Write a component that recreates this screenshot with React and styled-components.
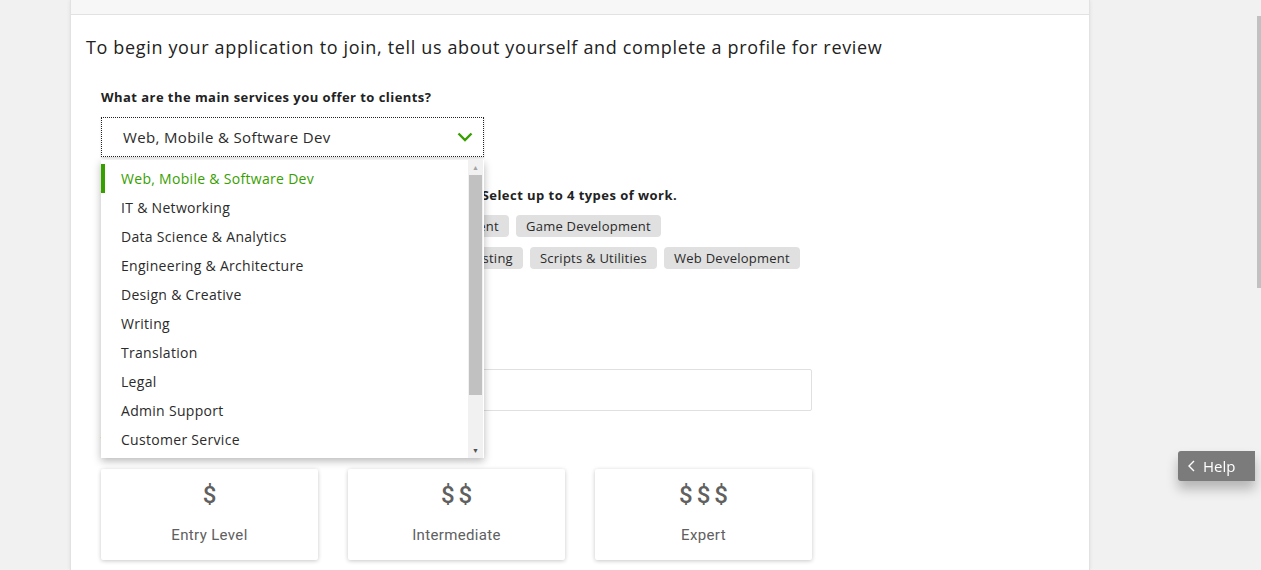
import styled, { createGlobalStyle } from 'styled-components';

const GlobalStyle = createGlobalStyle`
    html, body {
        margin: 0;
        padding: 0;
        background-color: #f1f1f1;
        font-family: 'Open Sans', 'Liberation Sans', sans-serif;
        color: #222222;
        overflow: hidden;
    }
`

const Page = styled.div`
    display: flex;
    min-height: 100vh;
    padding-left: 70px;
`

const Sheet = styled.main`
    width: 1018px;
    min-height: 100vh;
    background-color: #ffffff;
    border-left: 1px solid #e2e2e2;
    border-right: 1px solid #e2e2e2;
    box-shadow: 0px 0px 4px rgba(0, 0, 0, 0.08);
    display: flex;
    flex-direction: column;
`

const TopStrip = styled.div`
    height: 14px;
    background-color: #f7f7f7;
    border-bottom: 1px solid #e2e2e2;
`

const Heading = styled.h1`
    margin: 20px 0 0 0;
    padding: 0 15px;
    font-size: 18px;
    line-height: 24px;
    font-weight: 400;
    letter-spacing: 0.65px;
    color: #222222;
`

const Form = styled.section`
    display: flex;
    flex-direction: column;
    padding-left: 30px;
`

const Label = styled.div`
    margin-top: ${props => props.gap}px;
    font-size: 13px;
    line-height: 18px;
    font-weight: 700;
    letter-spacing: 0.45px;
    color: #222222;
`

const SelectWrap = styled.div`
    position: relative;
    width: 383px;
    margin-top: 11px;
`

const SelectBox = styled.div`
    height: 38px;
    border: 1px dotted #222222;
    display: flex;
    align-items: center;
    justify-content: space-between;
    padding: 0 10px 0 21px;
    font-size: 15px;
    letter-spacing: 0.35px;
    color: #2b2b2b;
    box-shadow: 0px 1px 2px rgba(0, 0, 0, 0.15);
`

const Dropdown = styled.div`
    position: absolute;
    top: calc(100% + 3px);
    left: 0;
    width: 383px;
    height: 298px;
    background-color: #ffffff;
    box-shadow: 0px 3px 8px rgba(0, 0, 0, 0.28);
    display: flex;
    z-index: 5;
`

const OptionList = styled.ul`
    flex: 1;
    list-style: none;
    margin: 0;
    padding: 4px 0 0 0;
    overflow: hidden;
`

const Option = styled.li`
    height: 29px;
    display: flex;
    align-items: center;
    padding-left: ${props => props.selected ? '16px' : '20px'};
    border-left: ${props => props.selected ? '4px solid #37a000' : 'none'};
    font-size: 14px;
    letter-spacing: 0.3px;
    color: ${props => props.selected ? '#37a000' : '#2b2b2b'};
`

const ScrollTrack = styled.div`
    width: 15px;
    margin-right: 1px;
    background-color: #f1f1f1;
    display: flex;
    flex-direction: column;
    align-items: center;
`

const ScrollArrow = styled.div`
    height: 15px;
    display: flex;
    align-items: center;
    justify-content: center;
    font-size: 7px;
    color: ${props => props.active ? '#505050' : '#a3a3a3'};
`

const ScrollThumb = styled.div`
    width: 13px;
    height: 220px;
    background-color: #c1c1c1;
`

const ScrollSpace = styled.div`
    flex: 1;
`

const Chips = styled.div`
    width: 711px;
    margin-top: 11px;
    display: flex;
    flex-wrap: wrap;
    gap: 10px 7px;
`

const Chip = styled.span`
    height: 22px;
    display: flex;
    align-items: center;
    padding: 0 10px;
    border-radius: 4px;
    background-color: #e0e0e0;
    font-size: 13px;
    letter-spacing: 0.25px;
    color: #2b2b2b;
`

const TextInput = styled.div`
    width: 709px;
    height: 40px;
    margin-top: 15px;
    border: 1px solid #e0e0e0;
    border-radius: 2px;
`

const Levels = styled.div`
    display: flex;
    gap: 30px;
    margin-top: 19px;
`

const LevelCard = styled.div`
    width: 217px;
    height: 91px;
    background-color: #ffffff;
    border-radius: 2px;
    box-shadow: 0px 1px 4px rgba(0, 0, 0, 0.22);
    display: flex;
    flex-direction: column;
    align-items: center;
    color: #606060;
`

const Dollars = styled.div`
    margin-top: 12px;
    font-family: 'Roboto', 'Liberation Sans', sans-serif;
    font-size: 24px;
    line-height: 28px;
    font-weight: 500;
    word-spacing: -2px;
`

const LevelName = styled.div`
    margin-top: 17px;
    font-family: 'Roboto', 'Liberation Sans', sans-serif;
    font-size: 15px;
    line-height: 18px;
    letter-spacing: 0.35px;
`

const HelpButton = styled.button`
    position: fixed;
    top: 451px;
    right: 6px;
    width: 77px;
    height: 30px;
    border: none;
    border-radius: 3px 0 0 3px;
    background-color: #7b7b7b;
    color: #ffffff;
    font-family: 'Open Sans', sans-serif;
    font-size: 15px;
    display: flex;
    align-items: center;
    gap: 8px;
    padding: 0 0 0 10px;
    box-shadow: 0px 8px 12px rgba(0, 0, 0, 0.25);
`

const PageScroll = styled.div`
    position: fixed;
    top: 16px;
    right: 0;
    width: 4px;
    height: 272px;
    background-color: #c1c1c1;
`

const services = [
    'Web, Mobile & Software Dev',
    'IT & Networking',
    'Data Science & Analytics',
    'Engineering & Architecture',
    'Design & Creative',
    'Writing',
    'Translation',
    'Legal',
    'Admin Support',
    'Customer Service',
    'Sales & Marketing',
    'Accounting & Consulting',
]

const skills = [
    'Desktop Software Development',
    'Ecommerce Development',
    'Game Development',
    'Mobile Development',
    'Product Management',
    'QA & Testing',
    'Scripts & Utilities',
    'Web Development',
]

const levels = [
    { sign: '$', name: 'Entry Level' },
    { sign: '$ $', name: 'Intermediate' },
    { sign: '$ $ $', name: 'Expert' },
]

const Chevron = () => (
    <svg width="16" height="10" viewBox="0 0 16 10">
        <path d="M1.5 1.5 L8 8 L14.5 1.5" fill="none" stroke="#37a000" strokeWidth="2.4" />
    </svg>
)

const App = () => {
    return(
        <Page>
            <GlobalStyle />
            <Sheet>
                <TopStrip />
                <Heading>To begin your application to join, tell us about yourself and complete a profile for review</Heading>
                <Form>
                    <Label gap={29}>What are the main services you offer to clients?</Label>
                    <SelectWrap>
                        <SelectBox>
                            <span>Web, Mobile &amp; Software Dev</span>
                            <Chevron />
                        </SelectBox>
                        <Dropdown>
                            <OptionList>
                                {services.map((service, index) => (
                                    <Option key={service} selected={index === 0}>{service}</Option>
                                ))}
                            </OptionList>
                            <ScrollTrack>
                                <ScrollArrow>▲</ScrollArrow>
                                <ScrollThumb />
                                <ScrollSpace />
                                <ScrollArrow active>▼</ScrollArrow>
                            </ScrollTrack>
                        </Dropdown>
                    </SelectWrap>
                    <Label gap={29}>What types of work do you offer within your category? Select up to 4 types of work.</Label>
                    <Chips>
                        {skills.map(skill => <Chip key={skill}>{skill}</Chip>)}
                    </Chips>
                    <Label gap={67}>Describe your professional title</Label>
                    <TextInput />
                    <Label gap={21}>What is your experience level?</Label>
                    <Levels>
                        {levels.map(level => (
                            <LevelCard key={level.name}>
                                <Dollars>{level.sign}</Dollars>
                                <LevelName>{level.name}</LevelName>
                            </LevelCard>
                        ))}
                    </Levels>
                </Form>
            </Sheet>
            <HelpButton>
                <svg width="7" height="12" viewBox="0 0 7 12">
                    <path d="M6 1 L1 6 L6 11" fill="none" stroke="#ffffff" strokeWidth="1.4" />
                </svg>
                Help
            </HelpButton>
            <PageScroll />
        </Page>
    )
}

export default App;
